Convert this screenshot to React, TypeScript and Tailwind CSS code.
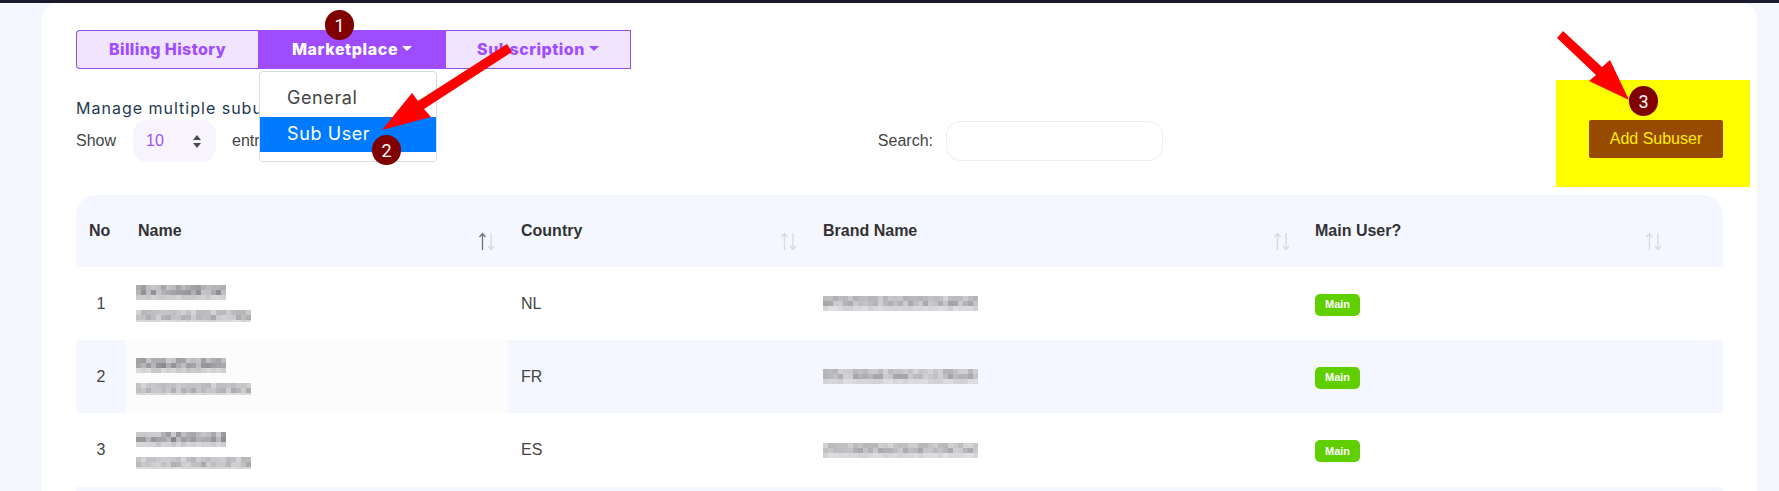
import React from "react";

function Mosaic({ w, h, seed, cell = 5, dark = 1 }: { w: number; h: number; seed: number; cell?: number; dark?: number }) {
  const rects: React.ReactNode[] = [];
  let s = seed;
  const rnd = () => {
    s = (s * 9301 + 49297) % 233280;
    return s / 233280;
  };
  for (let y = 0; y < h; y += cell) {
    for (let x = 0; x < w; x += cell) {
      const r = rnd();
      const band = y < cell ? 0.8 : y >= h - cell ? 0.35 : 1;
      const v = Math.round(232 - (0.35 + 0.65 * r) * 85 * band * dark);
      rects.push(<rect key={x + "-" + y} x={x} y={y} width={cell} height={cell} fill={`rgb(${v},${v},${v + 3})`} />);
    }
  }
  return (
    <svg width={w} height={h} className="block blur-[0.5px]" viewBox={`0 0 ${w} ${h}`}>
      {rects}
    </svg>
  );
}

function SortIcon({ active, className }: { active?: boolean; className: string }) {
  const up = active ? "#6b7280" : "#d5d9e2";
  return (
    <svg width="18" height="19" viewBox="0 0 18 19" className={`absolute top-[37px] ${className}`} fill="none">
      <path d="M4.5 18V1.5M1.5 5l3-3.5 3 3.5" stroke={up} strokeWidth="1.3" />
      <path d="M13 1v16.5M10 14l3 3.5 3-3.5" stroke="#d5d9e2" strokeWidth="1.3" />
    </svg>
  );
}

function Caret({ color }: { color: string }) {
  return (
    <span
      className="ml-[4px] inline-block h-0 w-0 border-x-[5px] border-t-[5px] border-x-transparent align-[3px]"
      style={{ borderTopColor: color }}
    />
  );
}

function Num({ n, className }: { n: number; className: string }) {
  return (
    <div
      className={`absolute z-30 flex h-[30px] w-[29px] items-center justify-center rounded-full bg-[#800000] font-['Roboto',sans-serif] text-[18px] text-white ${className}`}
    >
      {n}
    </div>
  );
}

const rows = [
  { no: 1, country: "NL", a: 11, b: 23, c: 37, striped: false, h: "h-[73px]" },
  { no: 2, country: "FR", a: 41, b: 59, c: 67, striped: true, h: "h-[73px]" },
  { no: 3, country: "ES", a: 71, b: 83, c: 97, striped: false, h: "h-[74px]" },
];

const poppins = { fontFamily: "Inter, 'Open Sans', sans-serif" };

export default function App() {
  return (
    <div className="relative h-[491px] w-[1779px] overflow-hidden bg-[#f5f7ff] font-['Liberation_Sans',sans-serif] text-[16px] text-[#333]">
      <div className="h-[3px] bg-[#1a1a2e]" />
      <div className="relative ml-[42px] h-[488px] w-[1715px] rounded-t-[16px] bg-white px-[34px] pt-[27px]">
        <div className="flex h-[39px] w-[555px]" style={poppins}>
          <div className="flex w-[182px] items-center justify-center rounded-l-[4px] border border-r-0 border-[#8f4fdc] bg-[#f0e4ff] pb-[2px] text-[16px] font-extrabold tracking-[0.4px] text-[#a04cff]">
            Billing History
          </div>
          <div className="relative flex w-[188px] items-center justify-center bg-[#9f4bff] pb-[2px] text-[16px] font-extrabold tracking-[0.6px] text-white">
            Marketplace
            <Caret color="#ffffff" />
            <div className="absolute left-[1px] top-[41px] z-10 h-[91px] w-[178px] rounded-[4px] border border-[#d9d9d9] bg-white pt-[7px] text-[18px] font-normal tracking-[0.6px]">
              <div className="flex h-[38px] items-center pb-[2px] pl-[27px] text-[#444]">General</div>
              <div className="flex h-[35px] items-center pb-[2px] pl-[27px] text-white bg-[#007bff]">Sub User</div>
            </div>
          </div>
          <div className="flex flex-1 items-center justify-center border border-l-0 border-[#8f4fdc] bg-[#f0e4ff] pb-[2px] text-[16px] font-extrabold tracking-[0.5px] text-[#a04cff]">
            Subscription
            <Caret color="#a04cff" />
          </div>
        </div>

        <div className="mr-[-27px] mt-[11px] flex h-[107px]">
          <div className="flex-1 pt-[18px]">
            <div className="text-[16px] leading-[20px] tracking-[1px] text-[#1f3a52]" style={poppins}>
              Manage multiple subusers
            </div>
            <div className="mt-[2px] flex w-[1087px] items-center justify-between">
              <div className="flex items-center text-[#444]">
                <span>Show</span>
                <div className="ml-[17px] flex h-[42px] w-[83px] items-center justify-between rounded-[14px] bg-[#f8f4ff] pl-[13px] pr-[15px] text-[#9a55e8]">
                  10
                  <svg width="8" height="13" viewBox="0 0 8 13" fill="#4b4b4b">
                    <path d="M4 0l4 5H0zM4 13L0 8h8z" />
                  </svg>
                </div>
                <span className="ml-[16px]">entries</span>
              </div>
              <div className="flex items-center text-[#444]">
                <span>Search:</span>
                <div className="ml-[13px] h-[40px] w-[217px] rounded-[14px] border border-[#eeeeee] bg-white" />
              </div>
            </div>
          </div>
          <div className="flex w-[194px] items-start bg-[#ffff00] pl-[33px] pt-[40px]">
            <button className="h-[38px] w-[134px] rounded-[2px] bg-[#964b00] text-[#ffee00]">Add Subuser</button>
          </div>
        </div>

        <table className="mt-[8px] w-[1647px] table-fixed border-collapse">
          <colgroup>
            <col className="w-[50px]" />
            <col className="w-[382px]" />
            <col className="w-[302px]" />
            <col className="w-[493px]" />
            <col className="w-[420px]" />
          </colgroup>
          <thead>
            <tr className="h-[72px] bg-[#f4f7ff] text-left font-bold text-[#333]">
              <th className="rounded-tl-[20px] pl-[13px]">No</th>
              <th className="relative pl-[12px]">
                Name
                <SortIcon active className="right-[12px]" />
              </th>
              <th className="relative pl-[13px]">
                Country
                <SortIcon className="right-[12px]" />
              </th>
              <th className="relative pl-[13px]">
                Brand Name
                <SortIcon className="right-[12px]" />
              </th>
              <th className="relative rounded-tr-[20px] pl-[12px]">
                Main User?
                <SortIcon className="right-[60px]" />
              </th>
            </tr>
          </thead>
          <tbody>
            {rows.map((r) => (
              <tr key={r.no} className={`${r.h} ${r.striped ? "bg-[#f4f7ff]" : "bg-white"}`}>
                <td className="text-center text-[#444]">{r.no}</td>
                <td className={`pl-[10px] ${r.striped ? "bg-[#fcfcfd]" : ""}`}>
                  <Mosaic w={90} h={15} seed={r.a} dark={1.15} />
                  <div className="mt-[10px]">
                    <Mosaic w={115} h={12} seed={r.b} dark={0.75} />
                  </div>
                </td>
                <td className="pl-[13px] text-[#444]">{r.country}</td>
                <td className="pl-[13px]">
                  <Mosaic w={155} h={15} seed={r.c} dark={0.8} />
                </td>
                <td className="pl-[12px]">
                  <span className="inline-flex h-[22px] w-[45px] items-center justify-center rounded-[5px] bg-[#5fcf00] text-[11px] font-bold text-white">
                    Main
                  </span>
                </td>
              </tr>
            ))}
            <tr className="h-[10px] bg-[#f4f7ff]">
              <td colSpan={5} />
            </tr>
          </tbody>
        </table>
      </div>

      <svg width="1779" height="491" viewBox="0 0 1779 491" className="pointer-events-none absolute left-0 top-0 z-20">
        <polygon points="382,130 412,93 418,101 507,44 512,52 424,109 431,117" fill="#ff0000" />
        <polygon points="1563,31 1602,67 1610,60 1629,100 1589,81 1596,75 1557,38" fill="#ff0000" />
      </svg>
      <Num n={1} className="left-[325px] top-[10px]" />
      <Num n={2} className="left-[372px] top-[135px]" />
      <Num n={3} className="left-[1629px] top-[86px]" />
    </div>
  );
}
